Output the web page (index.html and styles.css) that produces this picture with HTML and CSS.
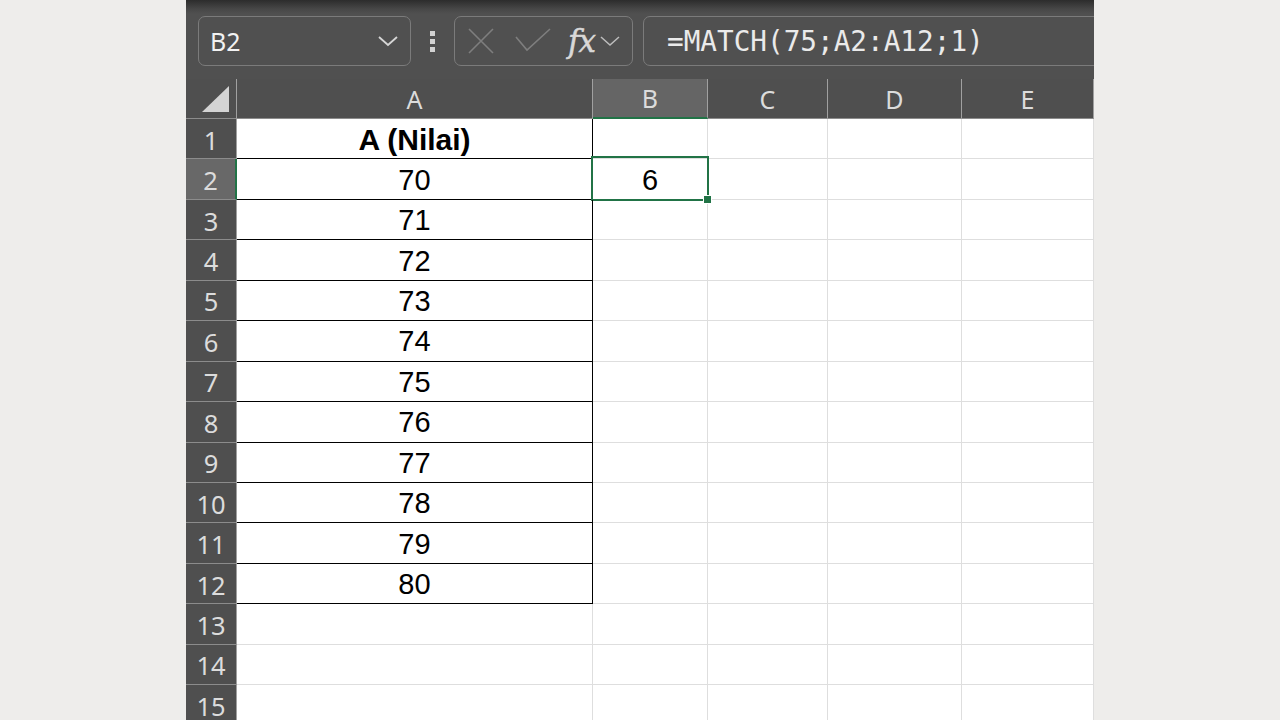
FILE: index.html
```html
<!DOCTYPE html>
<html lang="id">
<head>
  <meta charset="UTF-8" />
  <title>MATCH</title>
  <link rel="stylesheet" href="styles.css">
</head>
<body>

  <div class="excel">
    <!-- name box + formula bar -->
    <div class="formula-bar">
      <div class="name-box">
        <span>B2</span>
        <svg class="chev" width="22" height="14" viewBox="0 0 22 14"><path d="M2 3 L11 11 L20 3" /></svg>
      </div>
      <div class="bar-dots"><i></i><i></i><i></i></div>
      <div class="func-box">
        <svg width="26" height="26" viewBox="0 0 26 26" class="ico-x"><path d="M1 1 L25 25 M25 1 L1 25" /></svg>
        <svg width="36" height="26" viewBox="0 0 36 26" class="ico-ok"><path d="M1 9 L12 22 L35 1" /></svg>
        <span class="fx">fx</span>
        <svg class="chev small" width="20" height="12" viewBox="0 0 20 12"><path d="M1 2 L10 10 L19 2" /></svg>
      </div>
      <div class="formula-input">=MATCH(75;A2:A12;1)</div>
    </div>

    <!-- grid -->
    <div class="sheet">
      <div class="corner"><span></span></div>
      <div class="col-head">A</div>
      <div class="col-head active">B</div>
      <div class="col-head">C</div>
      <div class="col-head">D</div>
      <div class="col-head">E</div>

      <div class="row-head">1</div>
      <div class="cell boxed bold">A (Nilai)</div>
      <div class="cell"></div><div class="cell"></div><div class="cell"></div><div class="cell"></div>

      <div class="row-head active">2</div>
      <div class="cell boxed">70</div>
      <div class="cell selected">6</div><div class="cell"></div><div class="cell"></div><div class="cell"></div>

      <div class="row-head">3</div>
      <div class="cell boxed">71</div>
      <div class="cell"></div><div class="cell"></div><div class="cell"></div><div class="cell"></div>

      <div class="row-head">4</div>
      <div class="cell boxed">72</div>
      <div class="cell"></div><div class="cell"></div><div class="cell"></div><div class="cell"></div>

      <div class="row-head">5</div>
      <div class="cell boxed">73</div>
      <div class="cell"></div><div class="cell"></div><div class="cell"></div><div class="cell"></div>

      <div class="row-head">6</div>
      <div class="cell boxed">74</div>
      <div class="cell"></div><div class="cell"></div><div class="cell"></div><div class="cell"></div>

      <div class="row-head">7</div>
      <div class="cell boxed">75</div>
      <div class="cell"></div><div class="cell"></div><div class="cell"></div><div class="cell"></div>

      <div class="row-head">8</div>
      <div class="cell boxed">76</div>
      <div class="cell"></div><div class="cell"></div><div class="cell"></div><div class="cell"></div>

      <div class="row-head">9</div>
      <div class="cell boxed">77</div>
      <div class="cell"></div><div class="cell"></div><div class="cell"></div><div class="cell"></div>

      <div class="row-head">10</div>
      <div class="cell boxed">78</div>
      <div class="cell"></div><div class="cell"></div><div class="cell"></div><div class="cell"></div>

      <div class="row-head">11</div>
      <div class="cell boxed">79</div>
      <div class="cell"></div><div class="cell"></div><div class="cell"></div><div class="cell"></div>

      <div class="row-head">12</div>
      <div class="cell boxed">80</div>
      <div class="cell"></div><div class="cell"></div><div class="cell"></div><div class="cell"></div>

      <div class="row-head">13</div>
      <div class="cell"></div><div class="cell"></div><div class="cell"></div><div class="cell"></div><div class="cell"></div>

      <div class="row-head">14</div>
      <div class="cell"></div><div class="cell"></div><div class="cell"></div><div class="cell"></div><div class="cell"></div>

      <div class="row-head">15</div>
      <div class="cell"></div><div class="cell"></div><div class="cell"></div><div class="cell"></div><div class="cell"></div>
    </div>
  </div>

</body>
</html>
```

FILE: styles.css
```css
/* PAGE */
body {
  margin: 0;
  background-color: #eeedeb;
  height: 720px;
  overflow: hidden;
}
.excel {
  width: 908px;
  margin: 0 auto;
  background: #fff;
  overflow: hidden;
  font-family: 'Noto Sans', 'Open Sans', sans-serif;
}

/* FORMULA BAR */
.formula-bar {
  height: 79px;
  box-sizing: border-box;
  padding: 16px 0 0 12px;
  display: flex;
  align-items: flex-start;
  background: linear-gradient(#2c2c2c 0, #474747 9px, #505050 14px);
}
.name-box,
.func-box,
.formula-input {
  height: 50px;
  box-sizing: border-box;
  border: 1.5px solid #7b7b7b;
  border-radius: 7px;
  display: flex;
  align-items: center;
}
.name-box {
  width: 213px;
  padding: 0 11px 0 11px;
  justify-content: space-between;
  color: #f2f2f2;
  font-size: 25px;
}
.chev {
  fill: none;
  stroke: #d6d6d6;
  stroke-width: 1.8;
}
.chev.small {
  stroke: #bdbdbd;
  stroke-width: 1.5;
}
.bar-dots {
  width: 43px;
  height: 50px;
  display: flex;
  flex-direction: column;
  align-items: center;
  justify-content: center;
  gap: 3px;
}
.bar-dots i {
  width: 5px;
  height: 5px;
  background: #d2d2d2;
}
.func-box {
  width: 179px;
  padding: 0 4px 0 13px;
  gap: 0;
}
.ico-x {
  fill: none;
  stroke: #7e7e7e;
  stroke-width: 1.6;
  margin-right: 21px;
}
.ico-ok {
  fill: none;
  stroke: #7e7e7e;
  stroke-width: 1.6;
  margin-right: 17px;
}
.fx {
  font-family: 'DejaVu Serif', 'Liberation Serif', serif;
  font-style: italic;
  font-size: 31px;
  color: #d8d8d8;
  margin-right: 5px;
  letter-spacing: -1px;
  -webkit-text-stroke: 0.5px #d8d8d8;
}
.formula-input {
  flex: 1;
  margin-left: 10px;
  margin-right: -20px;
  padding-left: 23px;
  font-family: 'DejaVu Sans Mono', 'Liberation Mono', monospace;
  font-size: 27.7px;
  color: #eaeaea;
}

/* SHEET GRID */
.sheet {
  display: grid;
  grid-template-columns: 51px 356px 115px 120px 134px 1fr;
  grid-template-rows: 40px;
  grid-auto-rows: 40.45px;
}
.corner,
.col-head,
.row-head {
  background: #4f4f4f;
  color: #dcdcdc;
  font-size: 25px;
  display: flex;
  align-items: center;
  justify-content: center;
  box-sizing: border-box;
}
.corner {
  justify-content: flex-end;
  align-items: flex-end;
  padding: 0 7px 6px 0;
  border-right: 1px solid #a0a0a0;
  border-bottom: 1px solid #8c8c8c;
}
.corner span {
  width: 27px;
  height: 26px;
  background: #d4d4d4;
  clip-path: polygon(100% 0, 100% 100%, 0 100%);
}
.col-head {
  border-right: 1px solid #a0a0a0;
  border-bottom: 1px solid #8c8c8c;
}
.col-head.active {
  background: #656565;
  border-bottom: 2px solid #217346;
}
.row-head {
  border-right: 1px solid #a0a0a0;
  border-bottom: 1px solid #8c8c8c;
  padding-top: 2px;
  font-size: 25.5px;
}
.row-head.active {
  background: #686868;
  border-right: 2px solid #217346;
}

/* CELLS */
.cell {
  position: relative;
  box-sizing: border-box;
  border-right: 1px solid #dedede;
  border-bottom: 1px solid #dedede;
  display: flex;
  align-items: center;
  justify-content: center;
  font-family: 'Liberation Sans', Arial, sans-serif;
  font-size: 29px;
  color: #000;
  padding-top: 2px;
}
.cell.boxed {
  border-right: 1px solid #000;
  border-bottom: 1px solid #000;
}
.cell.bold {
  font-weight: bold;
  font-size: 30px;
}
.cell.selected::after {
  content: "";
  position: absolute;
  top: -3px;
  left: -2px;
  right: -2px;
  bottom: -2px;
  border: 2px solid #217346;
}
/* fill handle */
.cell.selected::before {
  content: "";
  position: absolute;
  right: -5px;
  bottom: -5px;
  width: 7px;
  height: 7px;
  background: #217346;
  border: 1px solid #fff;
  z-index: 2;
}
```
